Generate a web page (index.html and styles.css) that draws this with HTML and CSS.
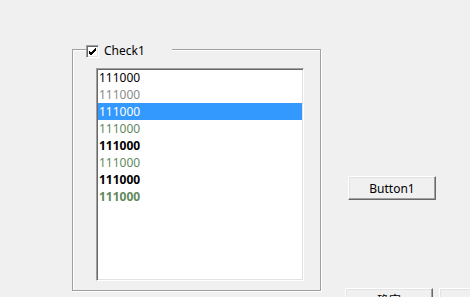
FILE: index.html
```html
<!DOCTYPE html>
<html>
<head>
<meta charset="utf-8">
<link rel="stylesheet" href="styles.css">
</head>
<body>
<div class="window">
  <div class="group">
    <div class="legend">
      <span class="checkbox"><svg width="9" height="9" viewBox="0 0 9 9"><path d="M1 4 L3 6 L8 1 M1 5 L3 7 L8 2 M1 6 L3 8 L8 3" stroke="#000" stroke-width="1" fill="none"/></svg></span>
      <span class="legend-text">Check1</span>
    </div>
    <div class="listbox">
      <div class="item">111000</div>
      <div class="item gray">111000</div>
      <div class="item selected">111000</div>
      <div class="item green">111000</div>
      <div class="item bold">111000</div>
      <div class="item green">111000</div>
      <div class="item bold">111000</div>
      <div class="item green bold">111000</div>
    </div>
  </div>
  <div class="side">
    <button class="btn btn-main">Button1</button>
    <div class="btn-row">
      <button class="btn">确定</button>
      <button class="btn">取消</button>
    </div>
  </div>
</div>
</body>
</html>
```

FILE: styles.css
```css
html, body {
  margin: 0;
  padding: 0;
  width: 470px;
  height: 297px;
  overflow: hidden;
  background: #f0f0f0;
  font-family: "Noto Sans", "Noto Sans CJK SC", sans-serif;
  font-size: 12px;
  color: #000;
}

.window {
  display: flex;
  align-items: flex-start;
  padding: 49px 0 0 72px;
}

.group {
  position: relative;
  box-sizing: border-box;
  width: 249px;
  height: 242px;
  border: 1px solid #a0a0a0;
  box-shadow: inset 1px 1px 0 #fff, 1px 1px 0 #fff;
  padding: 18px 0 0 23px;
  flex: none;
}

.legend {
  position: absolute;
  left: 13px;
  top: -7px;
  width: 86px;
  height: 16px;
  background: #f0f0f0;
  display: flex;
  align-items: center;
  gap: 5px;
}

.checkbox {
  box-sizing: border-box;
  width: 13px;
  height: 13px;
  background: #fff;
  border-top: 1px solid #a0a0a0;
  border-left: 1px solid #a0a0a0;
  border-bottom: 1px solid #fff;
  border-right: 1px solid #fff;
  box-shadow: inset 1px 1px 0 #696969, inset -1px -1px 0 #e3e3e3;
  display: flex;
  align-items: center;
  justify-content: center;
}

.checkbox svg {
  display: block;
}

.legend-text {
  line-height: 16px;
}

.listbox {
  box-sizing: border-box;
  width: 208px;
  height: 213px;
  background: #fff;
  border-top: 1px solid #a0a0a0;
  border-left: 1px solid #a0a0a0;
  border-bottom: 1px solid #fff;
  border-right: 1px solid #fff;
  box-shadow: inset 1px 1px 0 #696969, inset -1px -1px 0 #e3e3e3;
  padding: 0 1px 1px 1px;
}

.item {
  height: 17px;
  line-height: 17px;
  padding-left: 1px;
  white-space: nowrap;
}

.item.gray {
  color: #8a8a8a;
}

.item.green {
  color: #62895e;
}

.item.bold {
  font-weight: bold;
}

.item.selected {
  background: #3399ff;
  color: #fff;
}

.side {
  display: flex;
  flex-direction: column;
  margin-left: 24px;
}

.btn {
  box-sizing: border-box;
  width: 88px;
  height: 24px;
  padding: 0;
  margin: 0;
  background: #f0f0f0;
  font-family: "Noto Sans", "Noto Sans CJK SC", sans-serif;
  font-size: 12px;
  color: #000;
  border-top: 1px solid #fff;
  border-left: 1px solid #fff;
  border-bottom: 1px solid #696969;
  border-right: 1px solid #696969;
  box-shadow: inset -1px -1px 0 #a0a0a0, inset 1px 1px 0 #e3e3e3;
}

.btn-main {
  margin-top: 127px;
  margin-left: 3px;
}

.btn-row {
  display: flex;
  gap: 6px;
  margin-top: 88px;
}
```
